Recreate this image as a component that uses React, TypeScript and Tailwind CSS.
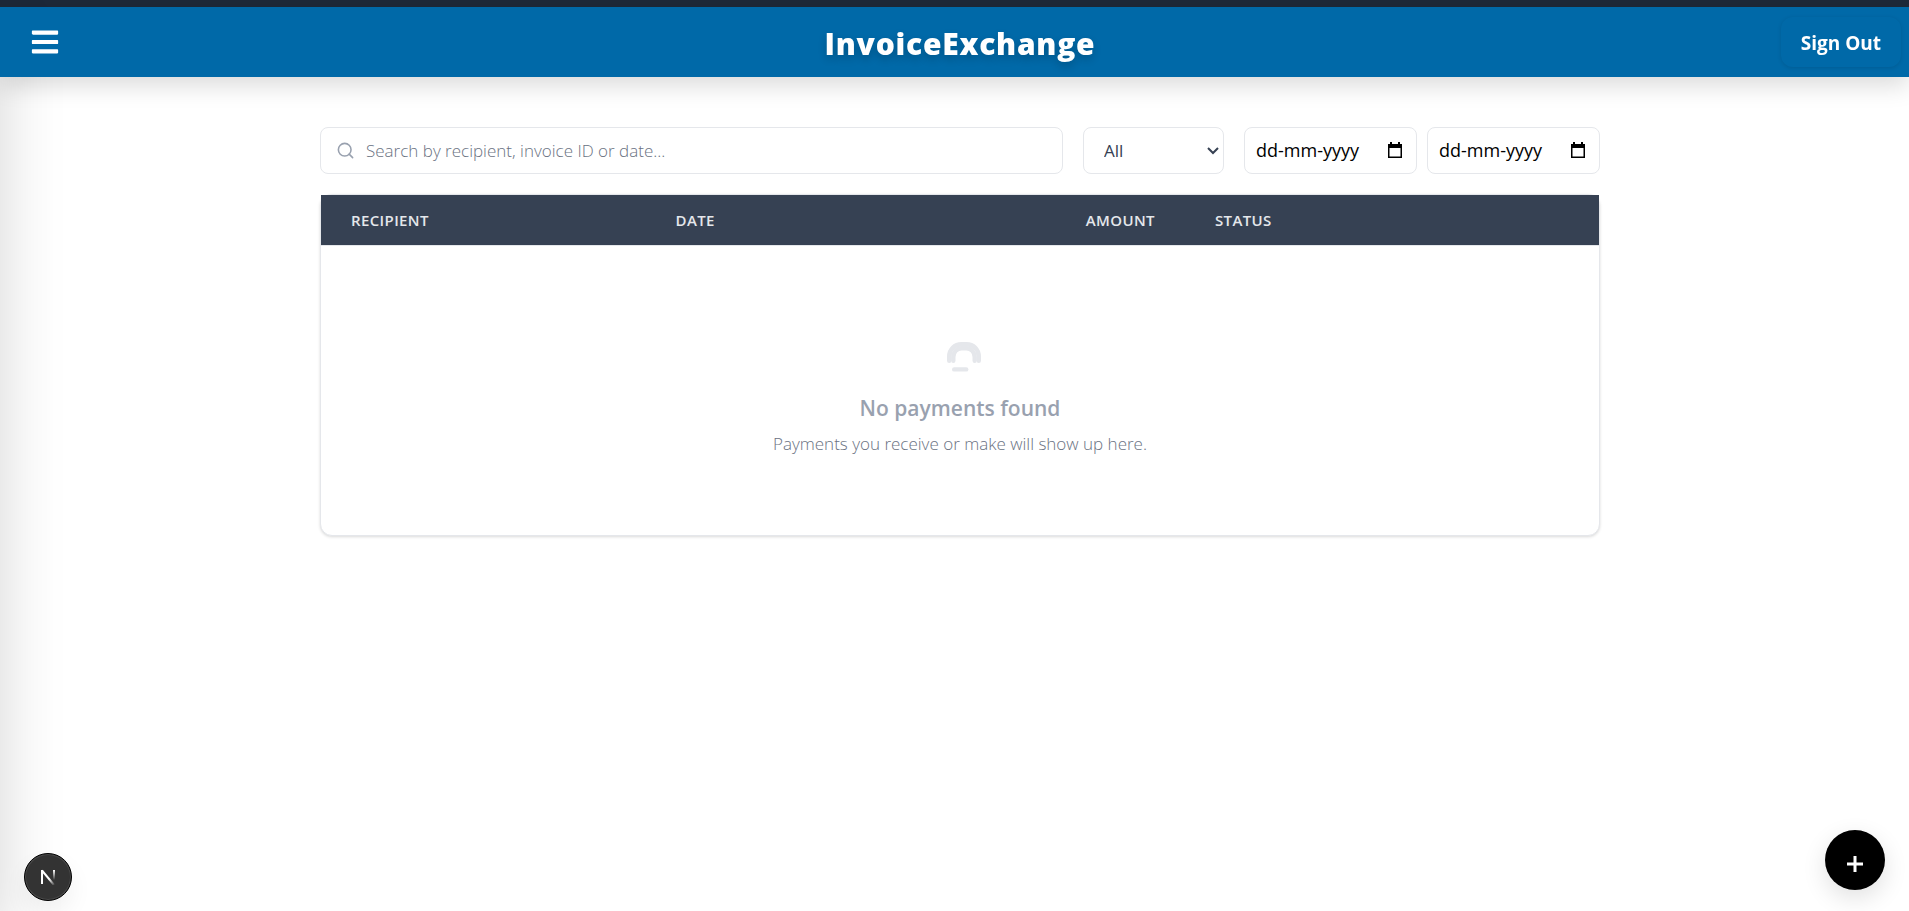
import React from "react";
import { FaBars } from "react-icons/fa";
import { FiSearch } from "react-icons/fi";

function CalendarIcon() {
  return (
    <svg viewBox="0 0 14 17" className="h-[17px] w-[14px]" fill="none" aria-hidden="true">
      <path d="M2 0h2v3H2zM10 0h2v3h-2z" fill="currentColor" />
      <path d="M0 2h14v4H0z" fill="currentColor" />
      <path d="M0.750 3v12.250h12.500V3" stroke="currentColor" strokeWidth="1.500" />
    </svg>
  );
}

function DateField({ label }: { label: string }) {
  return (
    <div className="flex h-[47px] w-[173px] items-center rounded-lg border border-gray-200 bg-white pr-[14px] pl-[11px]">
      <input
        type="text"
        aria-label={label}
        placeholder="dd-mm-yyyy"
        className="min-w-0 flex-1 text-[18px] text-black outline-none placeholder:text-black"
      />
      <button type="button" aria-label={`Pick ${label.toLowerCase()}`} className="text-black">
        <CalendarIcon />
      </button>
    </div>
  );
}

function Header() {
  return (
    <header className="relative z-20 flex h-[70px] items-center justify-between bg-[#0069a8] pr-2 pl-[30px] shadow-[0_8px_24px_rgba(0,0,0,0.15)]">
      <button type="button" aria-label="Open menu" className="text-white">
        <FaBars className="size-[30px]" />
      </button>
      <h1 className="pointer-events-none absolute inset-x-0 pt-[2px] pl-[11px] text-center text-[30px] font-extrabold tracking-wide text-white [text-shadow:0_4px_8px_rgba(0,0,0,0.2)]">
        InvoiceExchange
      </h1>
      <button
        type="button"
        className="h-[50px] rounded-xl px-5 pt-[2px] text-[19px] font-bold text-white shadow-[0_1px_4px_rgba(0,0,0,0.12)]"
      >
        Sign Out
      </button>
    </header>
  );
}

function Filters() {
  return (
    <div className="flex flex-wrap gap-5">
      <label className="flex h-[47px] min-w-[280px] flex-1 items-center gap-[11px] rounded-lg border border-gray-200 bg-white px-[15px]">
        <FiSearch className="size-[19px] shrink-0 text-gray-400" aria-hidden="true" />
        <input
          type="search"
          aria-label="Search payments"
          placeholder="Search by recipient, invoice ID or date..."
          className="min-w-0 flex-1 text-[17px] font-light text-gray-700 outline-none placeholder:text-gray-500"
        />
      </label>
      <div className="relative h-[47px] w-[141px]">
        <select
          aria-label="Status"
          className="size-full appearance-none rounded-lg border border-gray-200 bg-white pl-5 text-[17px] text-gray-700"
        >
          <option>All</option>
        </select>
        <svg
          viewBox="0 0 12 8"
          className="pointer-events-none absolute top-5 right-[5px] h-2 w-3 text-gray-700"
          fill="none"
          stroke="currentColor"
          strokeWidth="2"
          aria-hidden="true"
        >
          <path d="M1 1l5 5 5-5" />
        </svg>
      </div>
      <div className="flex gap-[10px]">
        <DateField label="Start date" />
        <DateField label="End date" />
      </div>
    </div>
  );
}

function EmptyIcon() {
  return (
    <svg
      viewBox="-8 0 42 30"
      className="h-[30px] w-[42px] text-gray-200"
      fill="none"
      stroke="currentColor"
      strokeWidth="4.400"
      strokeLinecap="round"
      aria-hidden="true"
    >
      <path d="M2.200 18.800V14.500C2.200 7.500 7.500 2.200 14.500 2.200h5C26.500 2.200 31.800 7.500 31.800 14.500v4.300" />
      <path d="M6.300 18.800V15C6.300 10 10 6.300 14.500 6.300h5C24 6.300 27.700 10 27.700 15v3.800" />
      <path d="M7.200 27.400h12" />
    </svg>
  );
}

function PaymentsTable() {
  return (
    <div className="rounded-xl border border-gray-200 bg-white shadow-[0_1px_3px_rgba(0,0,0,0.15)]">
      <table className="w-full table-fixed">
        <thead>
          <tr className="h-[50px] bg-[#364153] text-[15px] tracking-wide text-gray-200 uppercase">
            <th className="w-[25.4%] px-[30px] text-left font-semibold">Recipient</th>
            <th className="w-[22%] px-[30px] text-left font-semibold">Date</th>
            <th className="w-[20.2%] px-[30px] text-right font-semibold">Amount</th>
            <th className="px-[30px] text-left font-semibold">Status</th>
          </tr>
        </thead>
        <tbody>
          <tr>
            <td colSpan={4} className="h-[290px] border-t border-gray-200">
              <div className="flex flex-col items-center pt-5 text-center text-gray-400">
                <EmptyIcon />
                <p className="mt-5 text-[21px] leading-8 font-semibold">No payments found</p>
                <p className="mt-[6px] text-[17px] leading-7 font-light text-gray-500">
                  Payments you receive or make will show up here.
                </p>
              </div>
            </td>
          </tr>
        </tbody>
      </table>
    </div>
  );
}

export default function App() {
  return (
    <div className="min-h-screen overflow-x-hidden bg-white font-['Open_Sans','Noto_Sans',sans-serif]">
      <div className="h-[7px] bg-gray-800" />
      <Header />
      <aside
        aria-hidden="true"
        className="fixed inset-y-0 left-0 z-10 w-64 -translate-x-full bg-white shadow-[0_25px_60px_0_rgba(0,0,0,0.17)]"
      />
      <main className="pt-[50px] pr-5 pl-[31px]">
        <div className="mx-auto flex max-w-7xl flex-col gap-5">
          <Filters />
          <PaymentsTable />
        </div>
      </main>
      <button
        type="button"
        aria-label="Open developer tools"
        className="fixed bottom-[10px] left-6 z-20 flex size-12 items-center justify-center rounded-full border border-black bg-[#333] text-white shadow-[inset_0_0_0_1px_#4a4a4a,0_12px_24px_rgba(0,0,0,0.06)]"
      >
        <svg viewBox="0 0 16 16" className="size-4" fill="none" strokeWidth="2" aria-hidden="true">
          <defs>
            <linearGradient id="stem" x1="0" y1="0" x2="0" y2="1">
              <stop offset="0" stopColor="#fff" />
              <stop offset="1" stopColor="#fff" stopOpacity="0" />
            </linearGradient>
            <linearGradient id="diagonal" x1="0" y1="0" x2="1" y2="1">
              <stop offset="0.6" stopColor="#fff" />
              <stop offset="1" stopColor="#fff" stopOpacity="0.1" />
            </linearGradient>
          </defs>
          <path d="M2 15V1" stroke="#fff" />
          <path d="M2 1.500L14 16" stroke="url(#diagonal)" />
          <path d="M13 1h2v10h-2z" fill="url(#stem)" />
        </svg>
      </button>
      <button
        type="button"
        aria-label="New payment"
        className="fixed right-6 bottom-[21px] z-20 flex size-[60px] items-center justify-center rounded-full bg-black pt-[7px] text-white shadow-[0_8px_24px_rgba(0,0,0,0.12)]"
      >
        <svg viewBox="0 0 16 16" className="size-4" stroke="currentColor" strokeWidth="3" aria-hidden="true">
          <path d="M8 0v16M0 8h16" />
        </svg>
      </button>
    </div>
  );
}
